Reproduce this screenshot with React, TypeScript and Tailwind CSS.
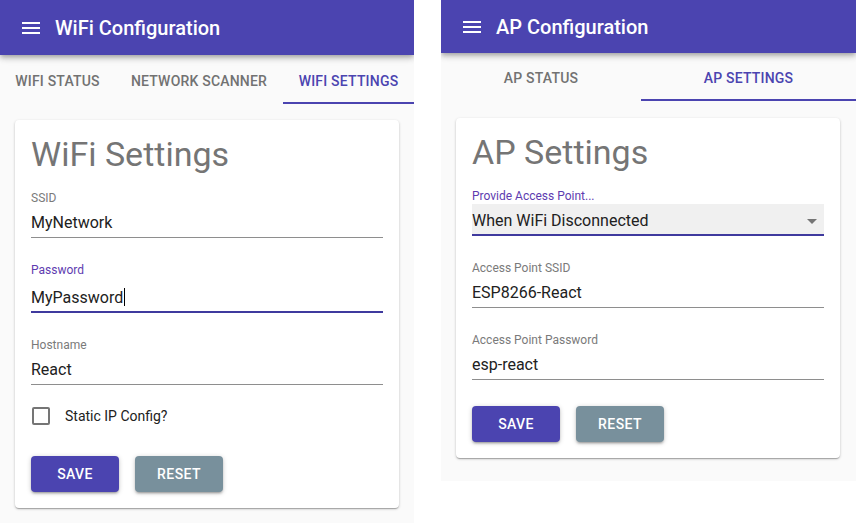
const FONT = "font-['Roboto','Liberation_Sans',sans-serif]";

type Tab = { label: string; width: string; active?: boolean };

function MenuIcon() {
  return (
    <svg viewBox="0 0 24 24" className="h-6 w-6 shrink-0 fill-white">
      <path d="M3 18h18v-2H3v2zm0-5h18v-2H3v2zm0-7v2h18V6H3z" />
    </svg>
  );
}

function Header({ title, height }: { title: string; height: string }) {
  return (
    <div
      className={`relative z-10 flex ${height} items-center gap-3 bg-[#4b44b0] pl-[19px] shadow-[0_2px_4px_-1px_rgba(0,0,0,0.2),0_4px_5px_0_rgba(0,0,0,0.14),0_1px_10px_0_rgba(0,0,0,0.12)]`}
    >
      <MenuIcon />
      <h1 className="text-[20px] font-medium leading-none text-white">{title}</h1>
    </div>
  );
}

function Tabs({ tabs, height }: { tabs: Tab[]; height: string }) {
  return (
    <div className={`flex ${height} shrink-0`}>
      {tabs.map((t) => (
        <div
          key={t.label}
          className={`flex ${t.width} shrink-0 items-center justify-center border-b-2 pt-[5px] text-[14px] font-medium uppercase tracking-[0.2px] ${
            t.active ? "border-[#4b44b0] text-[#4b44b0]" : "border-transparent text-[#727272]"
          }`}
        >
          {t.label}
        </div>
      ))}
    </div>
  );
}

function Field({
  label,
  value,
  focused,
  cursor,
}: {
  label: string;
  value: string;
  focused?: boolean;
  cursor?: boolean;
}) {
  return (
    <div className="pt-4 pb-2">
      <div className={`h-4 pt-[2px] text-[12px] leading-[12px] ${focused ? "text-[#5e3cb0]" : "text-[#7a7a7a]"}`}>
        {label}
      </div>
      <div
        className={`pt-[7px] text-[16px] leading-[19px] text-[#212121] ${
          focused ? "border-b-2 border-[#3f3a9e] pb-[4px]" : "border-b border-[#8e8e8e] pb-[5px]"
        }`}
      >
        {value}
        {cursor && <span className="ml-px inline-block h-[18px] w-px translate-y-[3px] bg-black" />}
      </div>
    </div>
  );
}

function SelectField({ label, value }: { label: string; value: string }) {
  return (
    <div className="pt-4 pb-2">
      <div className="h-4 pt-[2px] text-[12px] leading-[12px] text-[#5e3cb0]">{label}</div>
      <div className="flex items-center justify-between border-b-2 border-[#3f3a9e] bg-[#f0f0f0] pt-[7px] pb-[4px] text-[16px] leading-[19px] text-[#212121]">
        <span>{value}</span>
        <svg viewBox="0 0 24 24" className="-my-[3px] h-6 w-6 fill-[#757575]">
          <path d="M7 10l5 5 5-5z" />
        </svg>
      </div>
    </div>
  );
}

function Buttons({ mt }: { mt: string }) {
  const shadow =
    "shadow-[0_1px_5px_0_rgba(0,0,0,0.2),0_2px_2px_0_rgba(0,0,0,0.14),0_3px_1px_-2px_rgba(0,0,0,0.12)]";
  return (
    <div className={`${mt} flex gap-4`}>
      <button className={`h-9 w-[88px] rounded bg-[#4b44b0] text-[14px] font-medium uppercase tracking-[0.4px] text-white ${shadow}`}>
        Save
      </button>
      <button className={`h-9 w-[88px] rounded bg-[#78909c] text-[14px] font-medium uppercase tracking-[0.4px] text-white ${shadow}`}>
        Reset
      </button>
    </div>
  );
}

function Card({ mt, title, children }: { mt: string; title: string; children: React.ReactNode }) {
  return (
    <div
      className={`mx-[15px] ${mt} w-[384px] rounded bg-white px-4 pt-[14px] pb-4 shadow-[0_1px_3px_0_rgba(0,0,0,0.2),0_1px_1px_0_rgba(0,0,0,0.14),0_2px_1px_-1px_rgba(0,0,0,0.12)]`}
    >
      <h2 className="text-[34px] font-normal leading-[40px] text-[#757575]">{title}</h2>
      {children}
    </div>
  );
}

export default function App() {
  return (
    <div className={`flex h-[523px] w-[856px] items-start bg-white ${FONT}`}>
      <section className="flex h-[523px] w-[414px] shrink-0 flex-col overflow-hidden bg-[#fafafa]">
        <Header title="WiFi Configuration" height="h-[55px]" />
        <Tabs
          height="h-[49px]"
          tabs={[
            { label: "WiFi Status", width: "w-[115px]" },
            { label: "Network Scanner", width: "w-[168px]" },
            { label: "WiFi Settings", width: "w-[131px]", active: true },
          ]}
        />
        <Card mt="mt-4" title="WiFi Settings">
          <Field label="SSID" value="MyNetwork" />
          <Field label="Password" value="MyPassword" focused cursor />
          <Field label="Hostname" value="React" />
          <div className="-ml-[14px] -mt-px flex h-12 items-center">
            <div className="flex h-12 w-12 items-center justify-center">
              <div className="h-[18px] w-[18px] rounded-[2px] border-2 border-[#757575]" />
            </div>
            <span className="text-[14px] text-[#212121]">Static IP Config?</span>
          </div>
          <Buttons mt="mt-4" />
        </Card>
      </section>

      <section className="ml-[27px] flex h-[481px] w-[415px] shrink-0 flex-col overflow-hidden bg-[#fafafa]">
        <Header title="AP Configuration" height="h-[53px]" />
        <Tabs
          height="h-[48px]"
          tabs={[
            { label: "AP Status", width: "w-[200px]" },
            { label: "AP Settings", width: "w-[215px]", active: true },
          ]}
        />
        <Card mt="mt-[17px]" title="AP Settings">
          <SelectField label="Provide Access Point..." value="When WiFi Disconnected" />
          <Field label="Access Point SSID" value="ESP8266-React" />
          <Field label="Access Point Password" value="esp-react" />
          <Buttons mt="mt-[18px]" />
        </Card>
      </section>
    </div>
  );
}
